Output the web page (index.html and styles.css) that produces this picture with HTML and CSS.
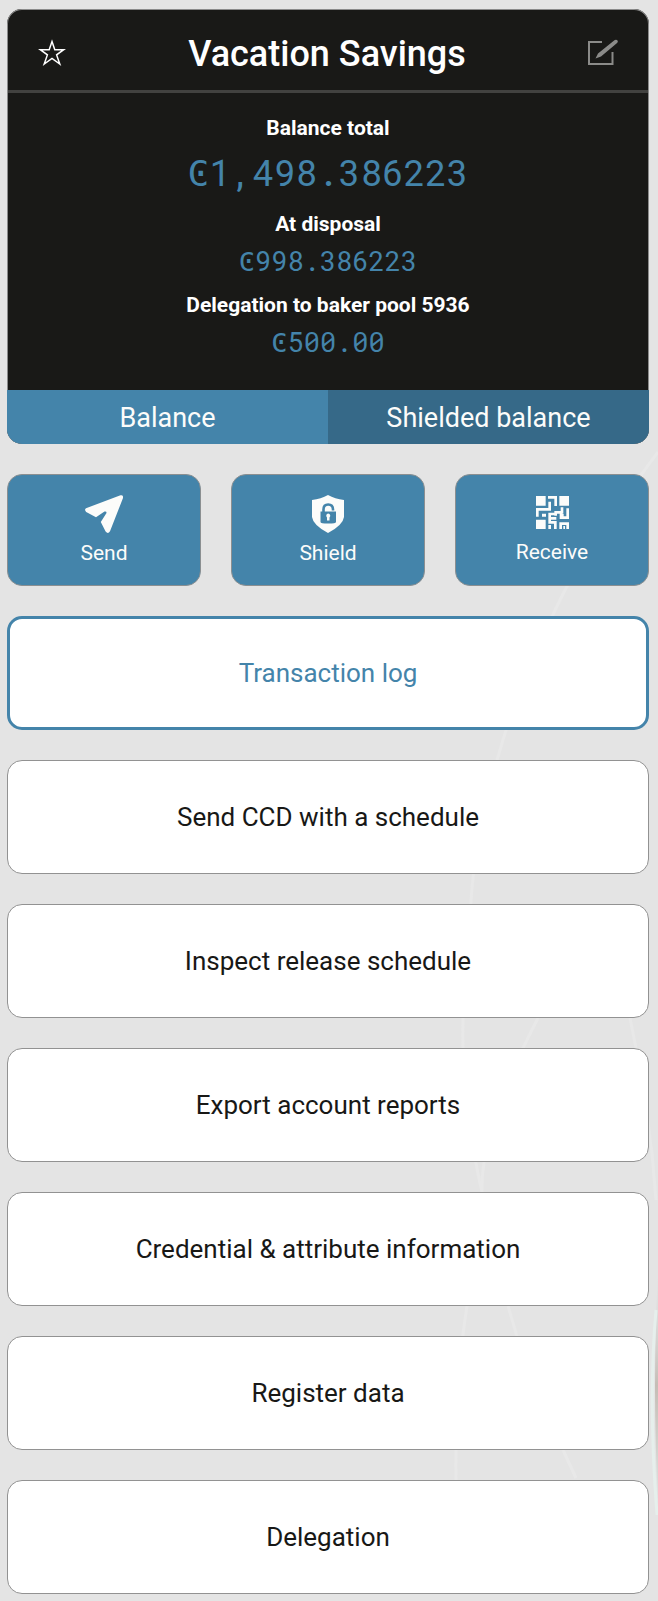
FILE: index.html
```html
<!DOCTYPE html>
<html lang="en">
<head>
<meta charset="utf-8">
<meta name="viewport" content="width=device-width, initial-scale=1">
<title>Vacation Savings</title>
<link rel="stylesheet" href="styles.css">
</head>
<body>
<svg class="backdrop" viewBox="0 0 658 1601" preserveAspectRatio="xMaxYMin slice" aria-hidden="true">
  <defs>
    <linearGradient id="edge" x1="0" y1="0" x2="0" y2="1">
      <stop offset="0" stop-color="#d8d8d8" stop-opacity="0"/>
      <stop offset=".5" stop-color="#c5bdb6"/>
      <stop offset="1" stop-color="#dfe3e1"/>
    </linearGradient>
  </defs>
  <g fill="none" stroke="#e8e8e8" stroke-width="3">
    <path d="M658 452Q600 530 565 590Q520 680 500 750Q470 850 470 930Q458 1030 466 1090Q472 1150 482 1192"/>
    <path d="M538 1018Q480 1130 482 1192M630 1018Q650 1110 656 1200M467 1306Q455 1380 456 1480M508 1306L518 1340M563 1450L576 1478"/>
  </g>
  <path d="M658 1270Q652 1390 658 1500Z" fill="url(#edge)"/>
  <path d="M656 1310Q648 1400 657 1515" fill="none" stroke="#e6efec" stroke-width="3"/>
</svg>
<main class="account">
  <section class="card">
    <header class="card-header">
      <button class="icon-button" type="button" aria-label="Favourite">
        <svg width="28" height="27" viewBox="0 0 28 27"><path d="M14 2.5L16.8 10.7H25.7L18.6 15.9L21.8 25L14 19.5L6.200 25L9.400 15.900L2.300 10.700H11.200Z" fill="none" stroke="#fff" stroke-width="1.500"/></svg>
      </button>
      <h1 class="title">Vacation Savings</h1>
      <button class="icon-button" type="button" aria-label="Edit name">
        <svg width="30" height="27" viewBox="0 0 30 27"><path d="M14 3H1V25H24.500V13" fill="none" stroke="#8b8b89" stroke-width="2"/><path d="M7.500 19.500L10 14.500L25.500 2Q28 0 29.500 1.500Q30.500 3 28.500 4.500L13 17.500Z" fill="#8b8b89"/></svg>
      </button>
    </header>
    <dl class="balances">
      <dt>Balance total</dt>
      <dd class="total">Ͼ1,498.386223</dd>
      <dt>At disposal</dt>
      <dd>Ͼ998.386223</dd>
      <dt>Delegation to baker pool 5936</dt>
      <dd>Ͼ500.00</dd>
    </dl>
    <div class="tabs">
      <button class="tab" type="button">Balance</button>
      <button class="tab tab-shielded" type="button">Shielded balance</button>
    </div>
  </section>
  <div class="actions">
    <button class="action" type="button">
      <svg width="38" height="38" viewBox="0 0 38 38"><path d="M1 13.200L35.500.2Q38.500-.3 38 3L25 36.300Q23 39.500 20.600 36.500L15.800 27L21.500 18Q21.700 16 19.500 16.500L11 22.200L1.200 17Q-1 14.800 1 13.200Z" fill="#fcfcfa"/></svg>
      <span>Send</span>
    </button>
    <button class="action" type="button">
      <svg width="32" height="38" viewBox="0 0 32 38"><path d="M16 0Q23 4 32 5V22Q31 30 16 38Q1 30 0 22V5Q9 4 16 0Z" fill="#fcfcfa"/><path d="M11.500 17V14.500Q11.500 9.500 16.200 9.500T21 14.500V15.500" fill="none" stroke="#4484aa" stroke-width="2.600"/><path d="M8.500 16.500H24V27Q24 28.500 16.200 28.500T8.500 27Z" fill="#4484aa"/><path d="M16.200 18.500A2.300 2.300 0 0 1 17.500 22.500V25.500H15V22.500A2.300 2.300 0 0 1 16.200 18.500Z" fill="#fcfcfa"/></svg>
      <span>Shield</span>
    </button>
    <button class="action" type="button">
      <svg width="33" height="37" viewBox="0 -3 99 111"><path d="M0 0H29V29H0ZM70 0H99V29H70ZM0 71H29V99H0ZM18 53H30V62H18ZM37 87H45V99H37ZM82 90H87V99H82Z" fill="#fcfcfa"/><path d="M36 4H59V30M41 17V40H4V62M59 59V49H78V34M75 48V58H83M95 37V65H71M61 67H41V79H58V99M74 99V83H95V99M41 67V54H58" fill="none" stroke="#fcfcfa" stroke-width="8"/></svg>
      <span>Receive</span>
    </button>
  </div>
  <nav class="menu">
    <button class="menu-item menu-item-primary" type="button">Transaction log</button>
    <button class="menu-item" type="button">Send CCD with a schedule</button>
    <button class="menu-item" type="button">Inspect release schedule</button>
    <button class="menu-item" type="button">Export account reports</button>
    <button class="menu-item" type="button">Credential &amp; attribute information</button>
    <button class="menu-item" type="button">Register data</button>
    <button class="menu-item" type="button">Delegation</button>
  </nav>
</main>
</body>
</html>
```
FILE: styles.css
```css
* {
  box-sizing: border-box;
}

body {
  position: relative;
  margin: 0;
  background: #e4e4e4;
  color: #181816;
  font-family: Roboto, "Liberation Sans", sans-serif;
}

button {
  margin: 0;
  padding: 0;
  border: 0;
  background: none;
  color: inherit;
  font: inherit;
  cursor: pointer;
}

svg {
  display: block;
}

.backdrop {
  position: absolute;
  inset: 0;
  width: 100%;
  height: 100%;
  z-index: -1;
}

.account {
  display: flex;
  flex-direction: column;
  gap: 30px;
  padding: 9px 9px 7px 7px;
}

.card {
  overflow: hidden;
  border-radius: 15px;
  background: #191917;
  color: #fff;
  box-shadow: inset 0 0 0 1px #8b8b8b;
}

.card-header {
  display: flex;
  align-items: center;
  justify-content: space-between;
  margin: 0 1px;
  height: 84px;
  padding: 5px 30px 0;
  border-bottom: 3px solid #424240;
}

.title {
  margin: 0;
  padding-top: 4px;
  font-size: 36px;
  font-weight: 500;
  line-height: 44px;
}

.balances {
  margin: 0;
  padding: 23px 15px 31px;
  text-align: center;
}

.balances dt {
  font-size: 21px;
  font-weight: 700;
  line-height: 24px;
}

.balances dd {
  margin: 9px 0 16px;
  color: #4484aa;
  font-family: "Roboto Mono", "DejaVu Sans Mono", monospace;
  font-size: 27px;
  line-height: 32px;
}

.balances .total {
  font-size: 36px;
  line-height: 47px;
}

.balances dd:last-child {
  margin-bottom: 1px;
}

.tabs {
  display: grid;
  grid-template-columns: 1fr 1fr;
}

.tab {
  height: 54px;
  padding-top: 2px;
  background: #4484aa;
  color: #fcfcfa;
  font-size: 27px;
}

.tab-shielded {
  background: #366988;
}

.actions {
  display: grid;
  grid-template-columns: repeat(3, 1fr);
  gap: 30px;
}

.action {
  display: flex;
  flex-direction: column;
  align-items: center;
  gap: 8px;
  height: 112px;
  padding-top: 20px;
  border: 1px solid #8b8f91;
  border-radius: 15px;
  background: #4484aa;
  color: #fcfcfa;
  font-size: 21px;
  line-height: 24px;
}

.menu {
  display: grid;
  gap: 30px;
}

.menu-item {
  height: 114px;
  border: 1px solid #929292;
  border-radius: 15px;
  background: #fff;
  font-size: 26px;
}

.menu-item-primary {
  border: 3px solid #4484aa;
  color: #4484aa;
}
```
